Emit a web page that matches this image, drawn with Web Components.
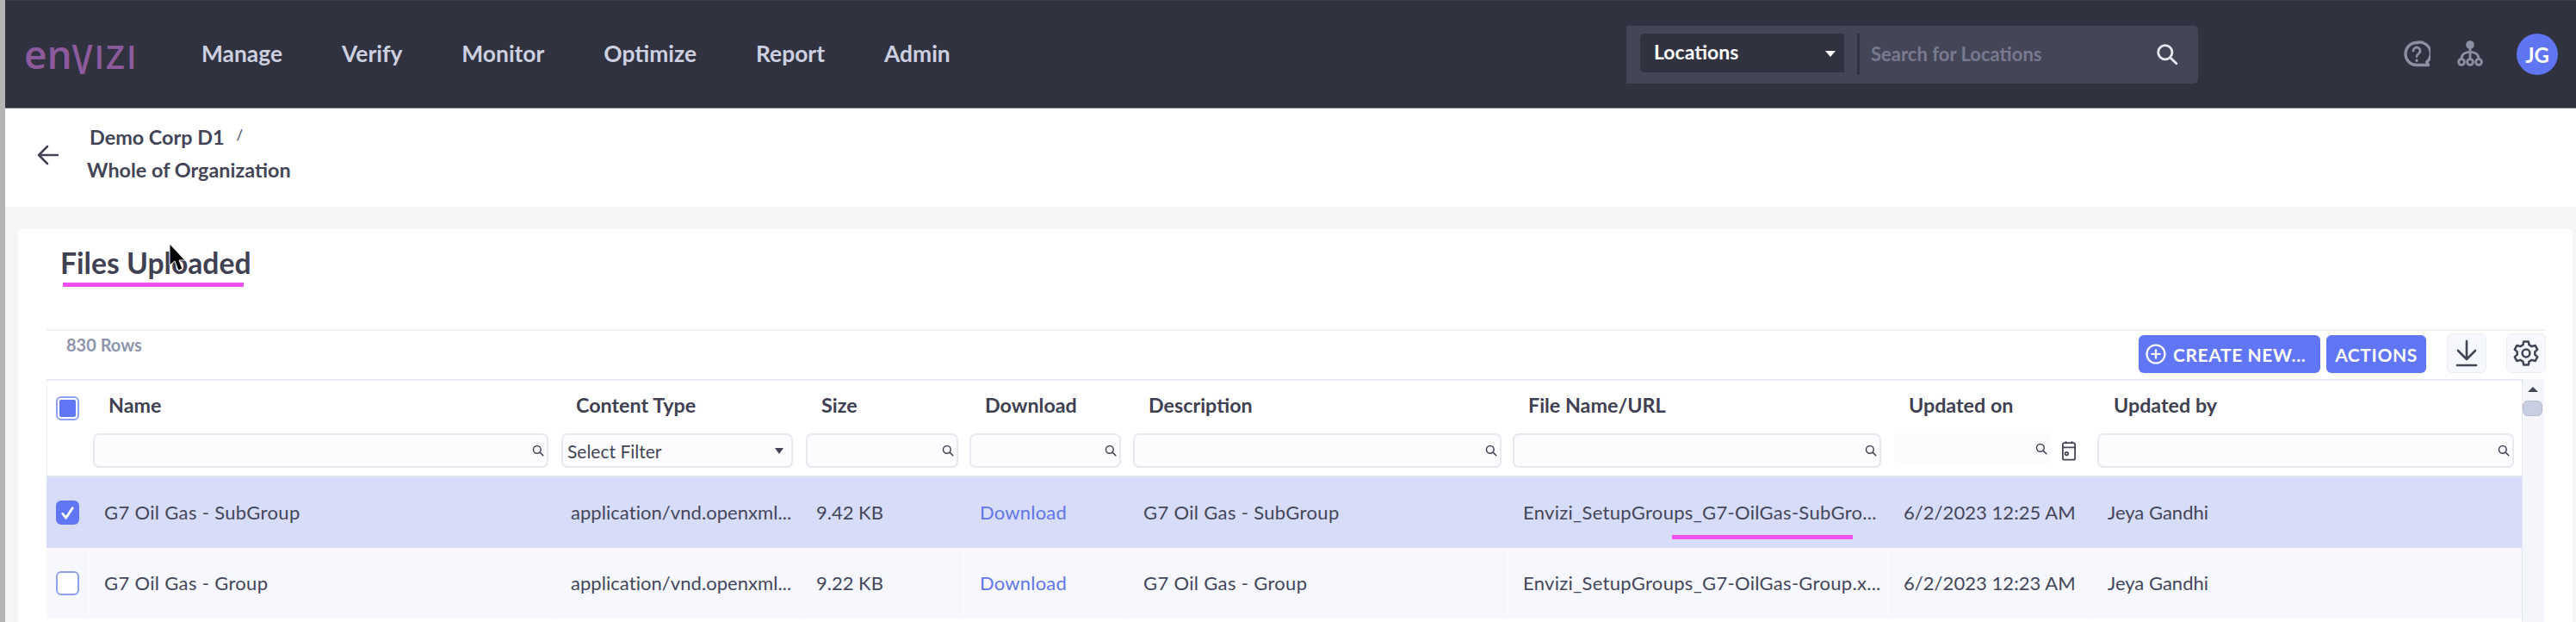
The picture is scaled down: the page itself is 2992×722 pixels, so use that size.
<!DOCTYPE html>
<html>
<head>
<meta charset="utf-8">
<title>Files Uploaded</title>
<style>
    html, body { margin: 0; padding: 0; }
    body {
        width: 2992px;
        height: 722px;
        overflow: hidden;
        background: #f4f5f7;
        font-family: Lato, "Noto Sans", sans-serif;
        color: #434557;
    }
    .shell { display: flex; height: 722px; }
    .strip { width: 6px; flex: none; background: #b4b4b6; }
    .main { flex: 1; min-width: 0; }
</style>
</head>
<body>
<div class="shell">
    <div class="strip"></div>
    <div class="main">
        <env-nav></env-nav>
        <env-crumbs></env-crumbs>
        <env-card>
            <env-title>Files Uploaded</env-title>
            <env-toolbar rows="830 Rows"></env-toolbar>
            <env-table></env-table>
        </env-card>
    </div>
</div>

<script>
const SEARCH_ICON = `<svg viewBox="0 0 24 24" fill="none" stroke="currentColor" stroke-width="2.6" stroke-linecap="round"><circle cx="10" cy="10" r="7.5"/><path d="M15.6 15.6L22 22"/></svg>`;

class EnvNav extends HTMLElement {
    constructor() {
        super();
        this.attachShadow({ mode: 'open' });
        const links = ['Manage', 'Verify', 'Monitor', 'Optimize', 'Report', 'Admin'];
        this.shadowRoot.innerHTML = `
            <style>
                :host {
                    display: flex;
                    align-items: center;
                    padding: 0 21px 0 22px;
                    background: #31323f;
                    border-top: 1px solid #3d3e4c;
                    border-bottom: 1px solid #85858c;
                    height: 124px;
                    font-family: Lato, sans-serif;
                }
                .logo {
                    width: 129px;
                    flex: none;
                    color: #8e5a9e;
                    font-family: "Open Sans", sans-serif;
                    font-weight: 600;
                    font-size: 46px;
                    line-height: 50px;
                    white-space: nowrap;
                    display: flex;
                    align-items: baseline;
                }
                .logo .caps { font-size: 38px; letter-spacing: 2px; }
                .logo .v { display: inline-block; transform: scaleY(1.25); transform-origin: 50% 30%; }
                nav { display: flex; gap: 69px; margin-left: 77px; margin-top: -3px; }
                nav a { color: #cdd0e0; font-size: 26.4px; font-weight: 700; }
                .search {
                    margin-left: auto;
                    width: 664px;
                    height: 67px;
                    box-sizing: border-box;
                    background: #444658;
                    border-radius: 0 5px 5px 0;
                    display: flex;
                    align-items: flex-start;
                    padding: 9px 0 0 16px;
                }
                .select {
                    width: 237px;
                    height: 45px;
                    box-sizing: border-box;
                    background: #31323f;
                    border-radius: 5px 0 0 5px;
                    color: #fff;
                    font-size: 23px;
                    font-weight: 700;
                    display: flex;
                    align-items: center;
                    justify-content: space-between;
                    padding: 0 10px 2px 16px;
                }
                .select i {
                    border-left: 6px solid transparent;
                    border-right: 6px solid transparent;
                    border-top: 7px solid #fff;
                    margin-top: 5px;
                }
                .sep { width: 3px; height: 48px; background: #31323f; margin-left: 15px; }
                .ph { color: #777a90; font-size: 22px; font-weight: 700; margin-left: 13px; line-height: 48px; }
                .go { width: 26px; height: 26px; margin-left: auto; margin-right: 23px; margin-top: 11px; color: #e6e7ef; }
                .icons { display: flex; align-items: center; margin-left: 239px; }
                .icons svg { display: block; color: #8c90a3; }
                .org { margin-left: 31px; margin-top: -3px; }
                .avatar {
                    margin-left: 39px;
                    width: 48px;
                    height: 48px;
                    border-radius: 50%;
                    background: #5f75f2;
                    color: #fff;
                    font-size: 24px;
                    font-weight: 700;
                    display: flex;
                    align-items: center;
                    justify-content: center;
                }
            </style>
            <div class="logo"><span>en</span><span class="caps"><span class="v">V</span>IZI</span></div>
            <nav>${links.map(l => `<a>${l}</a>`).join('')}</nav>
            <div class="search">
                <div class="select"><span>Locations</span><i></i></div>
                <div class="sep"></div>
                <div class="ph">Search for Locations</div>
                <div class="go">${SEARCH_ICON}</div>
            </div>
            <div class="icons">
                <svg width="31" height="32" viewBox="0 0 31 32" fill="none" stroke="currentColor" stroke-width="3.4" stroke-linecap="round" stroke-linejoin="round">
                    <path d="M15 2.500a13 13 0 1 0 0 26h13.500l-1.800-3.500A13 13 0 0 0 15 2.500z"/>
                    <path d="M11 12a4 4 0 1 1 6.400 3.200c-1.400 1-2.400 1.700-2.400 3.300" stroke-width="2.800"/>
                    <path d="M15 23v.4" stroke-width="3.200"/>
                </svg>
                <svg class="org" width="30" height="30" viewBox="0 0 30 30" fill="none" stroke="currentColor" stroke-width="2.800">
                    <circle cx="15" cy="5" r="4.800" fill="currentColor" stroke="none"/>
                    <path d="M15 8v13M5 21c0-6 5-7 10-8c5 1 10 2 10 8"/>
                    <circle cx="5" cy="25" r="3.400"/>
                    <circle cx="15" cy="25" r="3.400"/>
                    <circle cx="25" cy="25" r="3.400"/>
                </svg>
                <div class="avatar">JG</div>
            </div>
        `;
    }
}

class EnvCrumbs extends HTMLElement {
    constructor() {
        super();
        this.attachShadow({ mode: 'open' });
        this.shadowRoot.innerHTML = `
            <style>
                :host {
                    display: flex;
                    height: 114px;
                    background: #fff;
                    font-family: Lato, sans-serif;
                    color: #434557;
                    font-size: 23.4px;
                    font-weight: 700;
                    line-height: 38px;
                    white-space: nowrap;
                }
                svg { width: 26px; height: 26px; margin: 41px 0 0 37px; flex: none; }
                .lines { padding: 12px 0 0 32px; }
                .top { padding-left: 3px; }
                .top span { font-size: 17px; font-weight: 400; margin-left: 14px; vertical-align: 5px; }
            </style>
            <svg viewBox="0 0 26 26" fill="none" stroke="#434557" stroke-width="2.6" stroke-linecap="round" stroke-linejoin="round">
                <path d="M24 13H2M12 3L2 13l10 10"/>
            </svg>
            <div class="lines">
                <div class="top">Demo Corp D1<span>/</span></div>
                <div>Whole of Organization</div>
            </div>
        `;
    }
}

class EnvCard extends HTMLElement {
    constructor() {
        super();
        this.attachShadow({ mode: 'open' });
        this.shadowRoot.innerHTML = `
            <style>
                :host {
                    display: block;
                    position: relative;
                    margin: 26px 0 0 15px;
                    width: 2967px;
                    height: 456px;
                    box-sizing: border-box;
                    padding: 0 31px 0 33px;
                    background: #fff;
                    border-radius: 4px 4px 0 0;
                }
                .cursor { position: absolute; left: 175px; top: 16px; width: 19px; height: 34px; }
            </style>
            <slot></slot>
            <svg class="cursor" viewBox="0 0 19 34">
                <path d="M1 1v25l6-5 4 11 5-2-4-10h7z" fill="#000" stroke="#fff" stroke-width="1"/>
            </svg>
        `;
    }
}

class EnvTitle extends HTMLElement {
    constructor() {
        super();
        this.attachShadow({ mode: 'open' });
        this.shadowRoot.innerHTML = `
            <style>
                :host {
                    display: block;
                    position: relative;
                    height: 116px;
                    box-sizing: border-box;
                    padding: 19px 0 0 16px;
                    font-family: Lato, sans-serif;
                    font-size: 33.7px;
                    font-weight: 700;
                    line-height: 40px;
                    color: #3f4152;
                }
                .mark { position: absolute; left: 19px; top: 62px; width: 210px; height: 5px; background: #f050f0; }
            </style>
            <slot></slot>
            <div class="mark"></div>
        `;
    }
}

class EnvToolbar extends HTMLElement {
    constructor() {
        super();
        this.attachShadow({ mode: 'open' });
        this.shadowRoot.innerHTML = `
            <style>
                :host {
                    display: flex;
                    align-items: flex-start;
                    height: 58px;
                    box-sizing: border-box;
                    border-top: 2px solid #f0f2f7;
                    font-family: Lato, sans-serif;
                }
                .rows { color: #8e95ad; font-size: 20px; font-weight: 700; line-height: 24px; margin: 4px auto 0 23px; }
                button {
                    font: inherit;
                    border: 0;
                    height: 44px;
                    margin-top: 5px;
                    background: #6176f5;
                    color: #fff;
                    font-size: 21px;
                    font-weight: 700;
                    letter-spacing: .6px;
                    border-radius: 6px;
                    display: flex;
                    align-items: center;
                    padding: 0;
                    white-space: nowrap;
                }
                .create { width: 211px; gap: 8px; padding-left: 8px; }
                .create svg { width: 24px; height: 24px; flex: none; }
                .actions { width: 116px; margin-left: 7px; justify-content: center; }
                .tool {
                    width: 46px;
                    height: 46px;
                    margin-top: 3px;
                    box-sizing: border-box;
                    background: #f6f8fd;
                    border: 1px solid #eceef5;
                    border-radius: 6px;
                    display: flex;
                    align-items: center;
                    justify-content: center;
                }
                .dl { margin-left: 24px; }
                .cog { margin-left: 23px; }
            </style>
            <div class="rows"></div>
            <button class="create">
                <svg viewBox="0 0 24 24" fill="none" stroke="#fff" stroke-width="2.2"><circle cx="12" cy="12" r="10.5"/><path d="M12 6.500v11M6.500 12h11"/></svg>
                CREATE NEW...
            </button>
            <button class="actions">ACTIONS</button>
            <div class="tool dl">
                <svg width="26" height="32" viewBox="0 0 26 32" fill="none" stroke="#434557" stroke-width="2.6" stroke-linecap="round" stroke-linejoin="round">
                    <path d="M13 2v21M3 13l10 10 10-10M2 30h22"/>
                </svg>
            </div>
            <div class="tool cog">
                <svg width="32" height="32" viewBox="0 0 24 24" fill="none" stroke="#434557" stroke-width="1.900" stroke-linejoin="round">
                    <path d="M10 1.800h4l.7 3 2.300 1.300 2.900-.9 2 3.500-2.200 2.100v2.400l2.200 2.100-2 3.500-2.900-.9-2.300 1.300-.7 3h-4l-.7-3-2.300-1.300-2.900.9-2-3.500 2.200-2.100v-2.400l-2.200-2.100 2-3.500 2.900.9 2.300-1.300z"/>
                    <circle cx="12" cy="12" r="3.300"/>
                </svg>
            </div>
        `;
    }

    connectedCallback() {
        this.shadowRoot.querySelector('.rows').textContent = this.getAttribute('rows');
    }
}

class EnvCheck extends HTMLElement {
    constructor() {
        super();
        this.attachShadow({ mode: 'open' });
        this.shadowRoot.innerHTML = `
            <style>
                :host {
                    display: flex;
                    align-items: center;
                    justify-content: center;
                    width: 27px;
                    height: 28px;
                    box-sizing: border-box;
                    border-radius: 6px;
                    background: #fff;
                    border: 2px solid #8fa0f0;
                }
                :host([state="all"]) { padding: 2px; }
                :host([state="all"]) div { width: 100%; height: 100%; background: #6176f5; border-radius: 2px; }
                :host([state="on"]) { background: #6176f5; border-color: #6176f5; }
                svg { width: 19px; height: 19px; display: block; }
            </style>
            <div></div>
        `;
    }

    connectedCallback() {
        if (this.getAttribute('state') === 'on') {
            this.shadowRoot.querySelector('div').innerHTML =
                `<svg viewBox="0 0 20 20" fill="none" stroke="#fff" stroke-width="3" stroke-linecap="round" stroke-linejoin="round"><path d="M4 11l4 5 8-12"/></svg>`;
        }
    }
}

class EnvFilter extends HTMLElement {
    constructor() {
        super();
        this.attachShadow({ mode: 'open' });
        this.shadowRoot.innerHTML = `
            <style>
                :host {
                    display: flex;
                    align-items: center;
                    justify-content: flex-end;
                    height: 40px;
                    box-sizing: border-box;
                    background: #fcfcff;
                    border: 2px solid #e8e9f0;
                    border-radius: 7px;
                    padding-right: 3px;
                    color: #434557;
                    font-size: 21px;
                    white-space: nowrap;
                }
                :host([kind="select"]) { justify-content: space-between; padding: 0 9px 0 5px; }
                :host([kind="bare"]) { border-color: transparent; background: #fbfbfe; height: 35px; align-self: flex-start; }
                svg { width: 14px; height: 14px; color: #434557; display: block; }
                i {
                    border-left: 5px solid transparent;
                    border-right: 5px solid transparent;
                    border-top: 7px solid #434557;
                }
            </style>
        `;
    }

    connectedCallback() {
        if (this.getAttribute('kind') === 'select') {
            this.shadowRoot.innerHTML += `<span>Select Filter</span><i></i>`;
        } else {
            this.shadowRoot.innerHTML += SEARCH_ICON;
        }
    }
}

const COLUMNS = [
    { title: 'Name', pad: [5, 8], head: 24, cell: 18, track: .33 },
    { title: 'Content Type', pad: [7, 9], head: 25, cell: 18, track: .05, select: true },
    { title: 'Size', pad: [6, 6], head: 25, cell: 18, track: 0 },
    { title: 'Download', pad: [7, 7], head: 26, cell: 20, track: .2, link: true },
    { title: 'Description', pad: [7, 7], head: 26, cell: 19, track: .33 },
    { title: 'File Name/URL', pad: [6, 7], head: 25, cell: 18, track: .3 },
    { title: 'Updated on', pad: [8, 46], head: 26, cell: 19, track: .05, calendar: true },
    { title: 'Updated by', pad: [7, 9], head: 27, cell: 19, track: 0 }
];

const ROWS = [
    { selected: true, cells: ['G7 Oil Gas - SubGroup', 'application/vnd.openxml...', '9.42 KB', 'Download', 'G7 Oil Gas - SubGroup', 'Envizi_SetupGroups_G7-OilGas-SubGro...', '6/2/2023 12:25 AM', 'Jeya Gandhi'] },
    { selected: false, cells: ['G7 Oil Gas - Group', 'application/vnd.openxml...', '9.22 KB', 'Download', 'G7 Oil Gas - Group', 'Envizi_SetupGroups_G7-OilGas-Group.x...', '6/2/2023 12:23 AM', 'Jeya Gandhi'] }
];

class EnvTable extends HTMLElement {
    constructor() {
        super();
        this.attachShadow({ mode: 'open' });
        const head = COLUMNS.map(c => `<div class="th" style="padding-left:${c.head - 1}px">${c.title}</div>`).join('');
        const filters = COLUMNS.map(c => {
            const kind = c.select ? 'select' : c.calendar ? 'bare' : 'text';
            const cal = c.calendar ? `<svg class="cal" viewBox="0 0 18 26" fill="none" stroke="#434557" stroke-width="2"><rect x="1" y="3" width="16" height="22" rx="2"/><path d="M1 9h16M5 1v3M13 1v3"/><circle cx="6" cy="17" r="2"/></svg>` : '';
            return `<div class="tf" style="padding:0 ${c.pad[1]}px 0 ${c.pad[0]}px"><env-filter kind="${kind}"></env-filter>${cal}</div>`;
        }).join('');
        const rows = ROWS.map(r => `
            <div class="row ${r.selected ? 'sel' : ''}">
                <div class="td chk"><env-check state="${r.selected ? 'on' : 'off'}"></env-check></div>
                ${r.cells.map((t, i) => `<div class="td ${COLUMNS[i].link ? 'link' : ''}" style="padding-left:${COLUMNS[i].cell - (COLUMNS[i].link ? 1 : 0)}px;letter-spacing:${COLUMNS[i].track}px">${t}</div>`).join('')}
                ${r.selected ? '<div class="mark"></div>' : ''}
            </div>`).join('');
        this.shadowRoot.innerHTML = `
            <style>
                :host {
                    display: flex;
                    position: relative;
                    font-family: Lato, sans-serif;
                    color: #44465a;
                    white-space: nowrap;
                }
                .grid { width: 2875px; flex: none; border-top: 2px solid #e9ecf4; box-sizing: border-box; }
                .row, .heads, .filters { display: grid; grid-template-columns: 49px 542px 285px 189px 190px 442px 441px 237px 500px; }
                .heads { height: 61px; align-items: center; box-shadow: inset 1px 0 #eef0f6; }
                .heads .th { font-size: 23.3px; font-weight: 700; color: #3f4152; padding-bottom: 5px; }
                .filters { border-bottom: 2px solid #e3e5ec; height: 49px; box-shadow: inset 1px 0 #eef0f6; }
                .tf { display: flex; align-items: flex-start; }
                .tf env-filter { flex: 1; min-width: 0; }
                .cal { width: 16px; height: 24px; margin: 8px -28px 0 12px; flex: none; }
                .chk-head { display: flex; justify-content: center; margin-top: 3px; }
                .row { height: 82px; background: #f6f8fe; align-items: stretch; position: relative; }
                .row.sel { background: #d7dcf8; }
                .td { font-size: 22px; display: flex; align-items: center; overflow: hidden; box-sizing: border-box; padding-bottom: 1px; }
                .row:not(.sel) .td { box-shadow: inset 1px 0 #fbfcff; }
                .td.chk { padding: 0; justify-content: center; box-shadow: none !important; }
                .link { color: #6176e8; }
                .mark { position: absolute; left: 1888px; top: 67px; width: 210px; height: 5px; background: #f050f0; }
                .bar { width: 26px; flex: none; background: #f5f6fb; border-left: 1px solid #e6e8f0; box-sizing: border-box; height: 282px; position: relative; }
                .up {
                    position: absolute; left: 6px; top: 9px;
                    border-left: 6px solid transparent;
                    border-right: 6px solid transparent;
                    border-bottom: 6px solid #434557;
                }
                .thumb {
                    position: absolute; left: 0; top: 25px;
                    width: 23px; height: 18px;
                    box-sizing: border-box;
                    background: #c9cfe2;
                    border: 1px solid #b4bbd0;
                    border-radius: 6px;
                }
            </style>
            <div class="grid">
                <div class="heads"><div class="chk-head"><env-check state="all"></env-check></div>${head}</div>
                <div class="filters"><div></div>${filters}</div>
                ${rows}
            </div>
            <div class="bar"><div class="up"></div><div class="thumb"></div></div>
        `;
    }
}

customElements.define('env-nav', EnvNav);
customElements.define('env-crumbs', EnvCrumbs);
customElements.define('env-card', EnvCard);
customElements.define('env-title', EnvTitle);
customElements.define('env-toolbar', EnvToolbar);
customElements.define('env-check', EnvCheck);
customElements.define('env-filter', EnvFilter);
customElements.define('env-table', EnvTable);
</script>
</body>
</html>
